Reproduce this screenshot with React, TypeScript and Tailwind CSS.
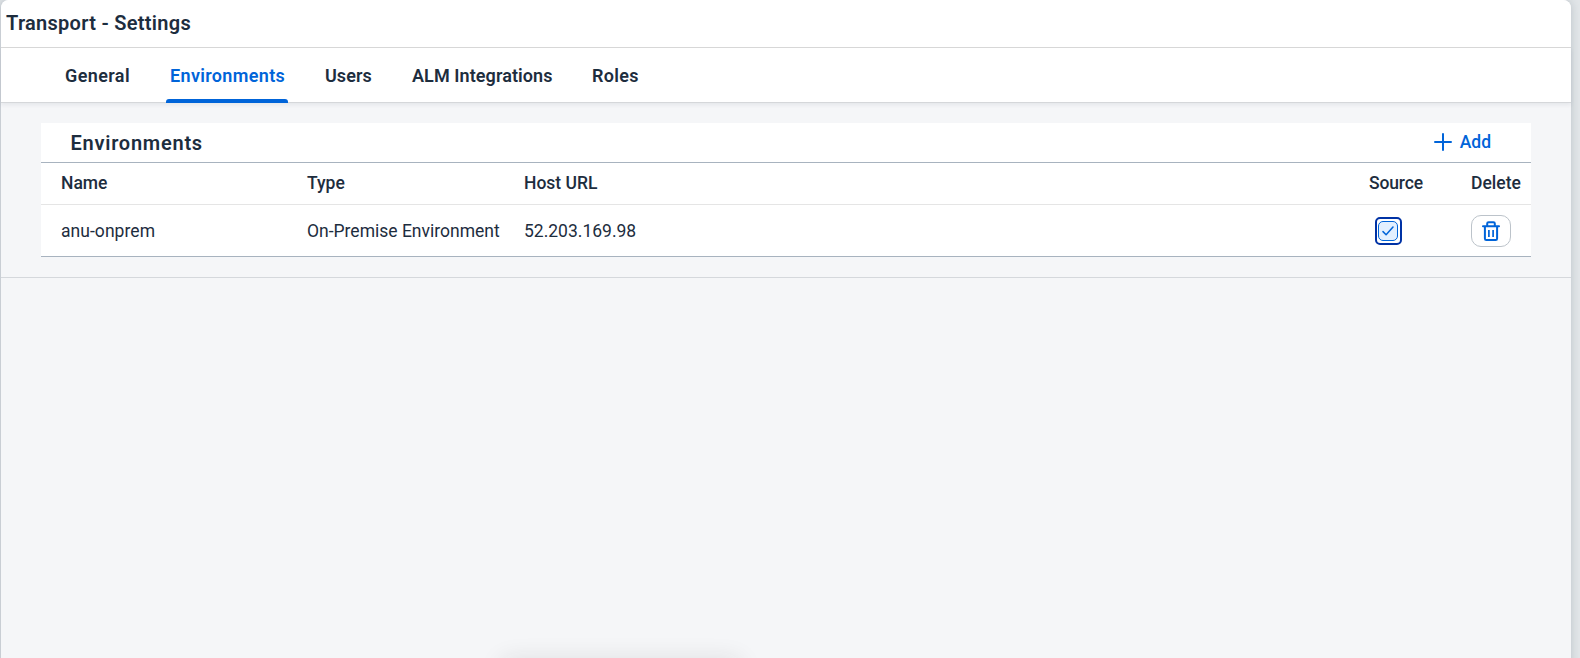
const tabs = [
  { label: 'General', width: 'w-[73px]', tracking: 'pl-1 tracking-[0.4px]' },
  { label: 'Environments', width: 'w-[122px]', tracking: 'pl-1 tracking-[0.34px]' },
  { label: 'Users', width: 'w-[55px]', tracking: 'pl-[5px] tracking-[0.05px]' },
  { label: 'ALM Integrations', width: 'w-[149px]', tracking: 'pl-[5px] tracking-[0.08px]' },
  { label: 'Roles', width: 'w-[55px]', tracking: 'pl-1 tracking-[0.3px]' },
];

function TrashIcon() {
  return (
    <svg width="18" height="20" viewBox="0 0 18 20" fill="none" stroke="#0064d9" strokeWidth="2">
      <path d="M1 5.2H17" strokeLinecap="round" />
      <path d="M5.2 5V2.6Q5.2 1.2 6.6 1.2H11.4Q12.8 1.2 12.8 2.6V5" />
      <path d="M2.9 5V17.4Q2.9 18.9 4.3 18.9H13.7Q15.1 18.9 15.1 17.4V5" />
      <path d="M6.9 9V16M11.1 9V16" strokeWidth="1.7" />
    </svg>
  );
}

export default function App() {
  return (
    <div className="flex h-[658px] w-[1580px] overflow-hidden bg-[#e1e5e8] font-['Roboto','Liberation_Sans',sans-serif] text-[#1d2d3e]">
      <main className="relative flex h-[680px] w-[1571px] flex-col rounded-t-[8px] border-l border-[#c9ced4] bg-[#f5f6f8] shadow-[0_0_8px_rgba(34,53,72,0.2)]">
        <header className="flex h-12 shrink-0 items-center rounded-t-[8px] border-b border-[#d9d9d9] bg-white pb-[2px] pl-[5px]">
          <h1 className="text-[20px] leading-6 font-semibold tracking-[0.28px] whitespace-nowrap">Transport - Settings</h1>
        </header>
        <nav className="flex h-[55px] shrink-0 gap-8 border-b border-[#d5d7da] bg-white pl-[60px] shadow-[0_2px_4px_rgba(34,53,72,0.08)]">
          {tabs.map((tab, i) => (
            <button
              key={tab.label}
              className={`relative -mb-px flex h-[55px] shrink-0 items-center pb-px text-[18px] font-semibold whitespace-nowrap ${tab.width} ${tab.tracking} ${i === 1 ? 'text-[#0064d9]' : ''}`}
            >
              {tab.label}
              {i === 1 && <span className="absolute inset-x-0 bottom-0 h-1 rounded-t-[3px] bg-[#0064d9]" />}
            </button>
          ))}
        </nav>
        <section className="h-[175px] shrink-0 border-b border-[#d5d8dc] px-10 pt-5">
          <div className="w-[1490px] bg-white">
            <div className="flex h-10 items-center justify-between border-b border-[#a8b3bf] pr-10 pl-[29.5px]">
              <h2 className="text-[20px] leading-6 font-semibold tracking-[0.75px]">Environments</h2>
              <button className="flex items-center gap-2 pb-[2px] text-[17.5px] font-medium text-[#0064d9]">
                <svg width="18" height="18" viewBox="0 0 18 18" stroke="#0064d9" strokeWidth="2" strokeLinecap="round">
                  <path d="M9 1V17M1 9H17" />
                </svg>
                <span className="pt-[2px]">Add</span>
              </button>
            </div>
            <div className="grid h-[42px] grid-cols-[246px_217px_844px_103px_60px] items-center border-b border-[#e5e5e5] pl-5 text-[17.5px] font-medium whitespace-nowrap">
              <span>Name</span>
              <span>Type</span>
              <span>Host URL</span>
              <span className="pl-px tracking-[-0.15px]">Source</span>
              <span>Delete</span>
            </div>
            <div className="grid h-[52px] grid-cols-[246px_217px_844px_103px_60px] items-center border-b border-[#a8b3bf] pl-5 text-[17.5px] whitespace-nowrap">
              <span className="pt-[2px] tracking-[0.05px]">anu-onprem</span>
              <span className="pt-[2px]">On-Premise Environment</span>
              <span className="pt-[2px]">52.203.169.98</span>
              <span className="ml-[7px] flex h-7 w-[27px] items-center rounded-[5px] border-2 border-[#0032a5] pl-px">
                <span className="flex size-5 items-center justify-center rounded-[5px] border border-[#0064d9] bg-[#e3f0ff]">
                  <svg width="12" height="10" viewBox="0 0 12 10" fill="none" stroke="#0064d9" strokeWidth="1.5" strokeLinecap="round" strokeLinejoin="round">
                    <path d="M1 5.6L4.1 8.7L11 1" />
                  </svg>
                </span>
              </span>
              <button className="flex h-8 w-10 items-center justify-center rounded-[10px] border border-[#bcc3ca] bg-white">
                <TrashIcon />
              </button>
            </div>
          </div>
        </section>
        <div className="absolute top-[660px] left-[500px] h-5 w-[240px] rounded-lg shadow-[0_0_24px_rgba(34,34,34,0.12)]" />
      </main>
    </div>
  );
}
